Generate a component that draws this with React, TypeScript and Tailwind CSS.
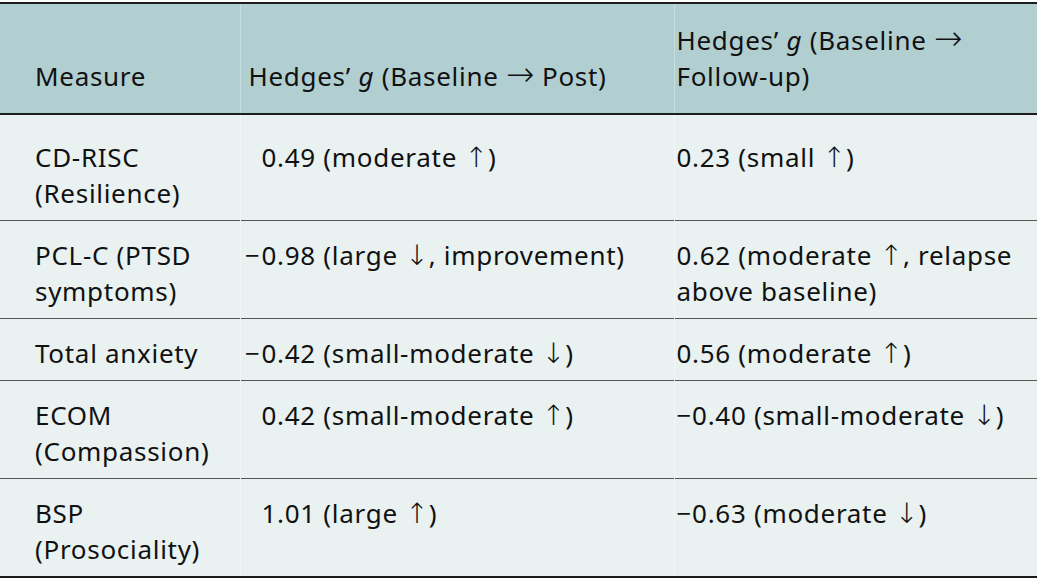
const rows: { measure: string[]; post: string; postNeg: boolean; follow: string[] }[] = [
  { measure: ['CD-RISC', '(Resilience)'], post: '0.49 (moderate ↑)', postNeg: false, follow: ['0.23 (small ↑)'] },
  {
    measure: ['PCL-C (PTSD', 'symptoms)'],
    post: '0.98 (large ↓, improvement)',
    postNeg: true,
    follow: ['0.62 (moderate ↑, relapse', 'above baseline)'],
  },
  { measure: ['Total anxiety'], post: '0.42 (small-moderate ↓)', postNeg: true, follow: ['0.56 (moderate ↑)'] },
  { measure: ['ECOM', '(Compassion)'], post: '0.42 (small-moderate ↑)', postNeg: false, follow: ['−0.40 (small-moderate ↓)'] },
  { measure: ['BSP', '(Prosociality)'], post: '1.01 (large ↑)', postNeg: false, follow: ['−0.63 (moderate ↓)'] },
]

// arrows from DejaVu Sans, light weight: thin strokes like the source
function Txt({ s }: { s: string }) {
  const parts = s.split(/([↑↓→])/)
  return (
    <>
      {parts.map((p, i) =>
        /[↑↓→]/.test(p) ? (
          <span
            key={i}
            className={
              p === '→'
                ? 'font-["DejaVu_Sans"] font-extralight text-[34px] leading-[0] tracking-normal'
                : 'font-["DejaVu_Sans"] font-extralight text-[28px] leading-[0] tracking-normal'
            }
          >
            {p}
          </span>
        ) : (
          <span key={i}>{p}</span>
        ),
      )}
    </>
  )
}

function Lines({ lines }: { lines: string[] }) {
  return (
    <>
      {lines.map((l) => (
        <div key={l} className="whitespace-nowrap">
          <Txt s={l} />
        </div>
      ))}
    </>
  )
}

export default function App() {
  return (
    <div className="w-[1042px] h-[582px] bg-white pt-[2px]" style={{ fontFamily: '"Noto Sans", "Open Sans", sans-serif' }}>
      <table className="w-[1037px] border-collapse text-[26px] leading-[36px] tracking-[0.7px] text-[#111]">
        <colgroup>
          <col className="w-[240px]" />
          <col className="w-[434px]" />
          <col className="w-[363px]" />
        </colgroup>
        <thead>
          <tr className="bg-[#b1cfd1] border-t-2 border-b-2 border-[#1c1c1c]">
            <th className="pl-[35px] pr-2 pt-[18px] pb-[19px] text-left font-normal align-bottom">Measure</th>
            <th className="pl-[8px] pr-2 pt-[18px] pb-[19px] text-left font-normal align-bottom border-l border-white/30 whitespace-nowrap">
              Hedges’ <i>g</i> (Baseline <Txt s="→" /> Post)
            </th>
            <th className="pl-[2px] pr-2 pt-[18px] pb-[19px] text-left font-normal align-bottom border-l border-white/30 whitespace-nowrap">
              Hedges’ <i>g</i> (Baseline <Txt s="→" />
              <br />
              Follow-up)
            </th>
          </tr>
        </thead>
        <tbody className="bg-[#e9f1f1]">
          {rows.map((r, i) => (
            <tr key={r.measure[0]} className={i < rows.length - 1 ? 'border-b border-[#555]' : 'border-b-2 border-[#1c1c1c]'}>
              <td className={`pl-[35px] pr-2 ${i === 0 ? 'pt-[24px]' : 'pt-[16px]'} pb-[9px] align-top`}>
                <Lines lines={r.measure} />
              </td>
              <td className={`pl-[2px] pr-2 ${i === 0 ? 'pt-[24px]' : 'pt-[16px]'} pb-[9px] align-top border-l border-white/40`}>
                <div className="flex whitespace-nowrap">
                  <span className="w-[19px] shrink-0 text-right pr-[1px]">{r.postNeg ? '−' : ''}</span>
                  <span>
                    <Txt s={r.post} />
                  </span>
                </div>
              </td>
              <td className={`pl-[2px] pr-2 ${i === 0 ? 'pt-[24px]' : 'pt-[16px]'} pb-[9px] align-top border-l border-white/40`}>
                <Lines lines={r.follow} />
              </td>
            </tr>
          ))}
        </tbody>
      </table>
    </div>
  )
}
